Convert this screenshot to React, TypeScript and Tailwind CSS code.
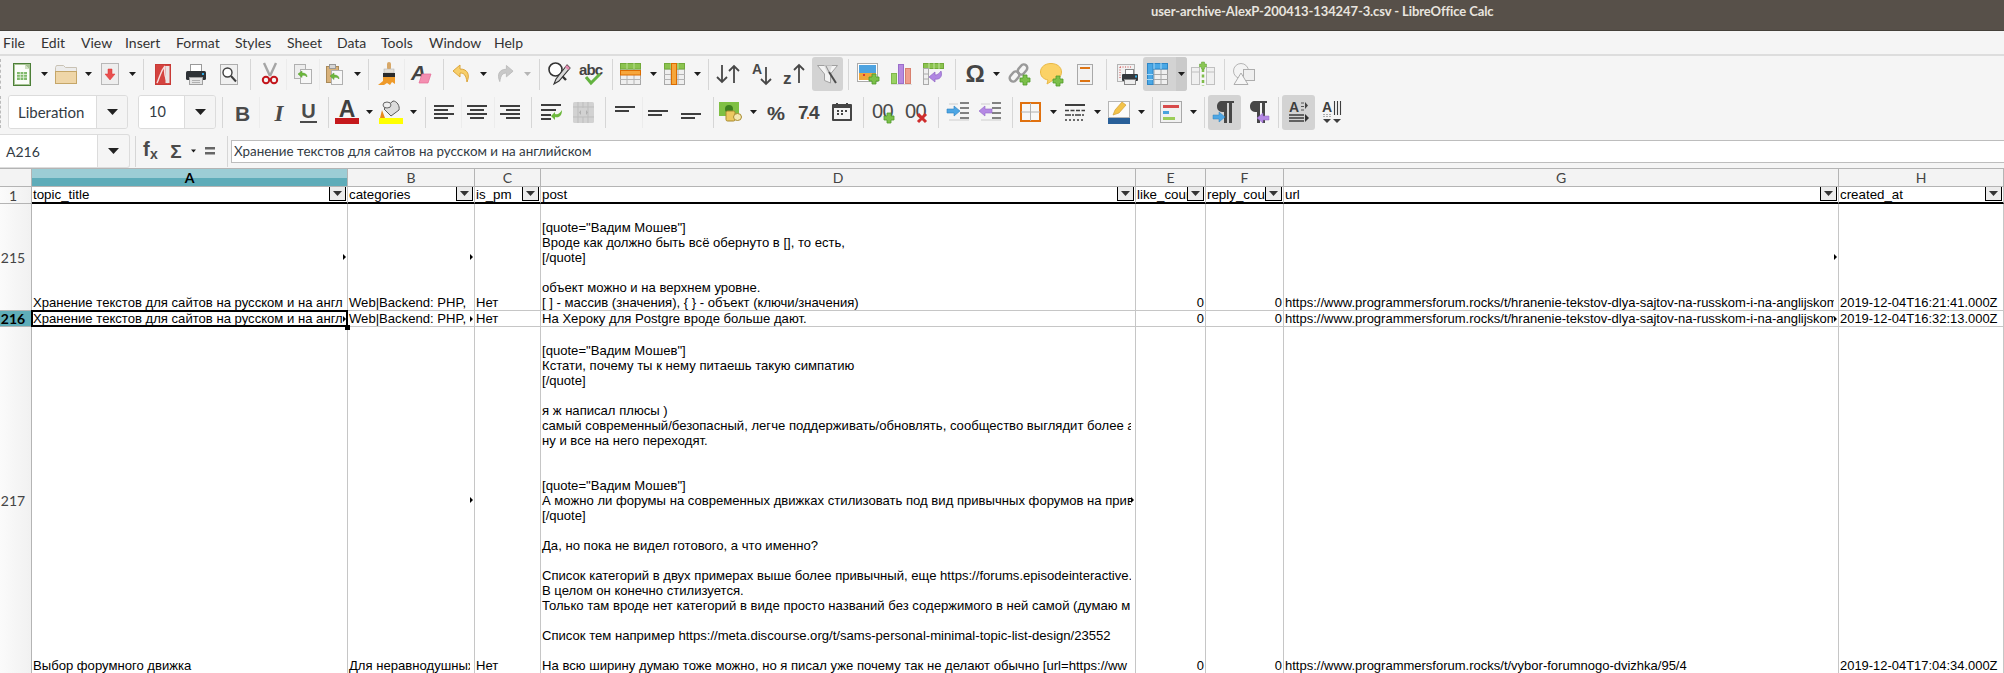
import React from 'react';
import clsx from 'clsx';

type IconProps = { className?: string };

const Svg: React.FC<{ w: number; h: number; className?: string; children: React.ReactNode }> = ({ w, h, className, children }) => (
  <svg width={w} height={h} viewBox={`0 0 ${w} ${h}`} className={clsx('shrink-0 overflow-visible', className)}>
    {children}
  </svg>
);

const Plus = ({ x, y }: { x: number; y: number }) => (
  <path
    d={`M${x + 3} ${y}h4v3h3v4h-3v3h-4v-3h-3v-4h3z`}
    fill="#7cc04a"
    stroke="#4f9a2a"
    strokeWidth="0.8"
  />
);

const Arrow = ({ className, gray }: IconProps & { gray?: boolean }) => (
  <Svg w={7} h={4} className={className}>
    <polygon points="0,0 7,0 3.5,4" fill={gray ? '#b5b5b5' : '#1d1d1d'} />
  </Svg>
);
const Sep = ({ className }: IconProps) => <div className={clsx('w-px h-[31px] shrink-0 bg-[#d6d6d6]', className)} />;
const LightSep = ({ className }: IconProps) => <div className={clsx('w-px h-[31px] shrink-0 bg-[#ececec]', className)} />;

const NewDoc = ({ className }: IconProps) => (
  <Svg w={18} h={23} className={className}>
    <rect x="0.5" y="0.5" width="17" height="22" fill="#a9c596" stroke="#4c7f38" />
    <path d="M2 2h10l4 4v15H2z" fill="#fbfdf9" />
    <path d="M12 2l4 4h-4z" fill="#cfe0c0" />
    <rect x="4" y="9" width="10" height="8" fill="#7fb96a" />
    <path d="M4 11.5h10M4 14.2h10M7.3 9v8M10.6 9v8" stroke="#e8f2e0" strokeWidth="0.8" />
  </Svg>
);
const Folder = ({ className }: IconProps) => (
  <Svg w={22} h={19} className={className}>
    <path d="M0.5 2.5l1-2h7l2 2h11v6h-21z" fill="#ececec" stroke="#c9c2b4" />
    <rect x="0.5" y="6.5" width="21" height="12" fill="#efd6a8" stroke="#c5a668" />
  </Svg>
);
const Save = ({ className }: IconProps) => (
  <Svg w={18} h={22} className={className}>
    <rect x="0.5" y="0.5" width="17" height="21" fill="#eeeeee" stroke="#b8b8b8" />
    <path d="M7 6h4v5h3l-5 6-5-6h3z" fill="#e8504f" stroke="#d33" strokeWidth="0.5" />
  </Svg>
);
const Pdf = ({ className }: IconProps) => (
  <Svg w={16} h={21} className={className}>
    <rect x="0.5" y="0.5" width="15" height="20" fill="#d4433f" stroke="#c83a36" />
    <path d="M10 2C5 8 5 13 2 19M10 2c-1 6 0 12 3 17" fill="none" stroke="#f6dcdc" strokeWidth="1.4" />
    <rect x="10.5" y="2" width="4" height="17" fill="#e9e4e4" />
  </Svg>
);
const Printer = ({ className }: IconProps) => (
  <Svg w={20} h={21} className={className}>
    <rect x="4.5" y="0.5" width="11" height="8" fill="#fff" stroke="#9a9a9a" />
    <rect x="0" y="7" width="20" height="9" rx="1.5" fill="#2e3236" />
    <rect x="16" y="9" width="2" height="2" fill="#32a9e0" />
    <rect x="3.5" y="13.5" width="13" height="7" fill="#e4e4e4" stroke="#a0a0a0" />
    <path d="M6 16.5h8M6 18.5h8" stroke="#b0b0b0" />
  </Svg>
);
const Preview = ({ className }: IconProps) => (
  <Svg w={18} h={21} className={className}>
    <rect x="0.5" y="0.5" width="17" height="20" fill="#f0f0f0" stroke="#adadad" />
    <circle cx="7.5" cy="8.5" r="4.5" fill="#fff" stroke="#3e3e3e" strokeWidth="1.4" />
    <path d="M11 12l5 5.5" stroke="#3e3e3e" strokeWidth="2" />
  </Svg>
);
const Cut = ({ className }: IconProps) => (
  <Svg w={16} h={22} className={className}>
    <path d="M2 0l6 13M14 0L8 13" stroke="#a5a5a5" strokeWidth="2.4" fill="none" />
    <circle cx="4" cy="17" r="3.2" fill="none" stroke="#c3161c" strokeWidth="2" />
    <circle cx="12" cy="17" r="3.2" fill="none" stroke="#c3161c" strokeWidth="2" />
  </Svg>
);
const GreenSwoop = ({ x, y }: { x: number; y: number }) => (
  <path d={`M${x} ${y + 3}l4-3v2c3 0 5 1 5 4-1-1.500-3-2-5-1.500v2z`} fill="#6cb83c" stroke="#559a2c" strokeWidth="0.5" />
);
const Copy = ({ className }: IconProps) => (
  <Svg w={18} h={20} className={className}>
    <rect x="0.5" y="0.5" width="11" height="14" fill="#ededed" stroke="#b0b0b0" />
    <rect x="6.5" y="5.500" width="11" height="14" fill="#f7f7f7" stroke="#b0b0b0" />
    <GreenSwoop x={4} y={7} />
  </Svg>
);
const Paste = ({ className }: IconProps) => (
  <Svg w={17} h={21} className={className}>
    <rect x="0.5" y="2.500" width="12" height="16" fill="#d9b27a" stroke="#a98a5a" />
    <rect x="3.500" y="0.500" width="6" height="4" fill="#d6d6d6" stroke="#999" />
    <rect x="5.500" y="6.500" width="11" height="14" fill="#f7f7f7" stroke="#b0b0b0" />
    <GreenSwoop x={4} y={9} />
  </Svg>
);
const Brush = ({ className }: IconProps) => (
  <Svg w={19} h={24} className={className}>
    <rect x="9" y="0" width="4" height="8" rx="2" fill="#d8a868" />
    <rect x="6" y="7" width="10" height="4" fill="#e4e0d8" stroke="#aaa" strokeWidth="0.5" />
    <rect x="5" y="11" width="12" height="4" fill="#2b2b2b" />
    <path d="M5 15h12v7l-3-2-2 3-3-2-3 2H0l5-4z" fill="#ee9a2a" />
  </Svg>
);
const ClearFormat = ({ className }: IconProps) => (
  <Svg w={21} h={20} className={className}>
    <text x="0" y="16" fontFamily="Liberation Sans" fontWeight="700" fontStyle="italic" fontSize="21" fill="#434343">A</text>
    <path d="M11 10h9l-3 9H8z" fill="#f48fb1" stroke="#e56a97" strokeWidth="0.7" />
  </Svg>
);
const Undo = ({ className, flip }: IconProps & { flip?: boolean }) => (
  <Svg w={19} h={18} className={className}>
    <g transform={flip ? 'matrix(-1 0 0 1 19 0)' : undefined}>
      <path
        d="M8 0L1 6l7 6V8c4 0 6 2 7 9 3-7 1-13-7-13z"
        fill={flip ? '#c8c8c8' : '#f7cf6b'}
        stroke={flip ? '#bcbcbc' : '#dca53b'}
        strokeWidth="1"
      />
    </g>
  </Svg>
);
const FindReplace = ({ className }: IconProps) => (
  <Svg w={22} h={24} className={className}>
    <circle cx="7.500" cy="7.500" r="6.500" fill="#fff" stroke="#333" strokeWidth="1.6" />
    <path d="M12 12l6 6" stroke="#333" strokeWidth="2.400" />
    <path d="M19 3l3 3-11 13-5 3 2-5z" fill="#d8d8d8" stroke="#333" strokeWidth="1.100" />
    <path d="M19 3l3 3-2 2-3-3z" fill="#e58bb0" />
  </Svg>
);
const Spell = ({ className }: IconProps) => (
  <Svg w={24} h={22} className={className}>
    <text x="0" y="12" fontFamily="Liberation Sans" fontWeight="700" fontSize="15" fill="#424242" textLength="24">abc</text>
    <path d="M7 14l5 6 9-9" fill="none" stroke="#63b340" strokeWidth="3" />
  </Svg>
);
const SheetBase = () => (
  <>
    <rect x="0.5" y="0.5" width="20" height="21" fill="#efefef" stroke="#a8a8a8" />
    <path d="M7 0v22M14 0v22M0 6h21M0 11.500h21M0 16.500h21" stroke="#b4b4b4" />
    <rect x="0.500" y="0.500" width="20" height="5.500" fill="#8bc34f" stroke="#72aa3a" />
    <path d="M7 0v6M14 0v6" stroke="#b9de93" />
  </>
);
const RowTable = ({ className }: IconProps) => (
  <Svg w={21} h={22} className={className}>
    <SheetBase />
    <rect x="0.500" y="7.500" width="20" height="4.500" fill="#f6a63c" stroke="#dc6c00" />
  </Svg>
);
const ColTable = ({ className }: IconProps) => (
  <Svg w={21} h={22} className={className}>
    <SheetBase />
    <rect x="7.500" y="0.500" width="5" height="21" fill="#f6a63c" stroke="#dc6c00" />
  </Svg>
);
const Sort = ({ className }: IconProps) => (
  <Svg w={24} h={20} className={className}>
    <path d="M6 1v17M1 13l5 5 5-5M18 19V2M13 7l5-5 5 5" fill="none" stroke="#474747" strokeWidth="1.800" />
  </Svg>
);
const SortAsc = ({ className }: IconProps) => (
  <Svg w={21} h={22} className={className}>
    <text x="0" y="11" fontFamily="Liberation Sans" fontWeight="700" fontSize="14" fill="#474747">A</text>
    <path d="M14 4v17M9 16l5 5 5-5" fill="none" stroke="#474747" strokeWidth="1.800" />
  </Svg>
);
const SortDesc = ({ className }: IconProps) => (
  <Svg w={23} h={22} className={className}>
    <text x="0" y="21" fontFamily="Liberation Sans" fontWeight="700" fontSize="17" fill="#474747">z</text>
    <path d="M16 20V2M11 7l5-5 5 5" fill="none" stroke="#474747" strokeWidth="1.800" />
  </Svg>
);
const Funnel = ({ className }: IconProps) => (
  <Svg w={21} h={19} className={className}>
    <path d="M0.500 0.500h20l-7 8.500v9l-6-2.500v-6.500z" fill="#f3f3f3" stroke="#a0a0a0" />
    <path d="M7 0.500l3 7h3l2-7z" fill="#dcdcdc" />
    <path d="M12 7l7 11" stroke="#4c4c4c" strokeWidth="2" />
    <path d="M9 1l3 6" stroke="#8a8a8a" strokeWidth="1" />
  </Svg>
);
const InsertImage = ({ className }: IconProps) => (
  <Svg w={23} h={22} className={className}>
    <rect x="0.500" y="0.500" width="20" height="18" fill="#fff" stroke="#aaa" />
    <rect x="2" y="2" width="17" height="8" fill="#4ea3e0" />
    <rect x="2" y="10" width="17" height="7" fill="#f0a63c" />
    <rect x="6" y="11" width="2" height="2" fill="#d33" />
    <Plus x={12} y={11} />
  </Svg>
);
const Chart = ({ className }: IconProps) => (
  <Svg w={21} h={21} className={className}>
    <rect x="0.500" y="9.500" width="5" height="10" fill="#9ad264" stroke="#7fb84b" />
    <rect x="7.500" y="0.500" width="5" height="19" fill="#b68ae0" stroke="#9a6ecb" />
    <rect x="14.500" y="4.500" width="5" height="15" fill="#ef9e8e" stroke="#d8806e" />
    <path d="M0 20.500h21" stroke="#ddd" />
  </Svg>
);
const Pivot = ({ className }: IconProps) => (
  <Svg w={21} h={22} className={className}>
    <rect x="0.500" y="0.500" width="20" height="5" fill="#8bc34f" stroke="#72aa3a" />
    <path d="M6 0v6M11 0v6M16 0v6" stroke="#c3e2a2" />
    <rect x="0.500" y="5.500" width="5" height="16" fill="#efefef" stroke="#aaa" />
    <path d="M0 11h6M0 16h6" stroke="#aaa" />
    <path d="M18 8c2 6-2 9-6 8v3l-6-5 6-5v3c2 0 4-1 6-4z" fill="#b086e2" stroke="#8f65c4" strokeWidth="0.700" />
  </Svg>
);
const Omega = ({ className }: IconProps) => (
  <Svg w={20} h={20} className={className}>
    <text x="10" y="18" textAnchor="middle" fontFamily="Liberation Sans" fontWeight="700" fontSize="24" fill="#454545">Ω</text>
  </Svg>
);
const LinkIcon = ({ className }: IconProps) => (
  <Svg w={23} h={23} className={className}>
    <g fill="none" stroke="#9a9a9a" strokeWidth="2.500">
      <rect x="11" y="1" width="7" height="11" rx="3.500" transform="rotate(40 14.500 6.500)" />
      <rect x="3" y="8" width="7" height="11" rx="3.500" transform="rotate(40 6.500 13.500)" />
    </g>
    <Plus x={12} y={12} />
  </Svg>
);
const CommentIcon = ({ className }: IconProps) => (
  <Svg w={23} h={23} className={className}>
    <path d="M11 0.500c6 0 10.500 3.500 10.500 8.500s-4.500 8.500-9 8.500L7 21l1-4C3 16 0.500 13 0.500 9 0.500 4 5 0.500 11 0.500z" fill="#fbd267" stroke="#e9b844" />
    <Plus x={13} y={13} />
  </Svg>
);
const HeaderFooter = ({ className }: IconProps) => (
  <Svg w={16} h={21} className={className}>
    <rect x="0.500" y="0.500" width="15" height="20" fill="#f2f2f2" stroke="#a9a9a9" />
    <rect x="3" y="3" width="10" height="2" fill="#dd7413" />
    <rect x="3" y="16" width="10" height="2" fill="#dd7413" />
  </Svg>
);
const PrintArea = ({ className }: IconProps) => (
  <Svg w={21} h={21} className={className}>
    <rect x="0.500" y="0.500" width="17" height="17" fill="#f1f1f1" stroke="#b4b4b4" />
    <path d="M3 3h11M3 3v12" stroke="#d34a4a" strokeDasharray="1 1.500" fill="none" />
    <rect x="8.500" y="5.500" width="8" height="5" fill="#fff" stroke="#888" />
    <rect x="5" y="10" width="16" height="7" rx="1" fill="#34383c" />
    <rect x="18" y="11.500" width="2" height="2" fill="#32a9e0" />
    <rect x="7.500" y="15.500" width="11" height="5" fill="#eee" stroke="#888" />
  </Svg>
);
const Freeze = ({ className }: IconProps) => (
  <Svg w={21} h={22} className={className}>
    <rect x="0.500" y="0.500" width="20" height="21" fill="#efefef" stroke="#a0a0a0" />
    <path d="M7 0v22M14 0v22M0 6h21M0 11.500h21M0 16.500h21" stroke="#a8a8a8" />
    <rect x="0.500" y="0.500" width="20" height="5.500" fill="#4aa8e6" stroke="#2e86c6" />
    <rect x="0.500" y="0.500" width="5.500" height="21" fill="#4aa8e6" stroke="#2e86c6" />
    <path d="M7 0v6M14 0v6" stroke="#a8d8f6" />
    <path d="M0 11.500h6M0 16.500h6" stroke="#a8d8f6" />
  </Svg>
);
const SplitWindow = ({ className }: IconProps) => (
  <Svg w={24} h={24} className={className}>
    <rect x="0.500" y="5.500" width="8" height="17" fill="#f0f0f0" stroke="#c0c0c0" />
    <rect x="15.500" y="5.500" width="8" height="17" fill="#f0f0f0" stroke="#c0c0c0" />
    <path d="M0 10h8M16 10h8" stroke="#c0c0c0" />
    <path d="M12 7v17" stroke="#7fbd4a" strokeWidth="2.500" strokeDasharray="3 2.500" />
    <path d="M10.500 0h3v2h2v3h-2v2h-3v-2h-2v-3h2z" fill="#8ac654" stroke="#5f9e33" strokeWidth="0.500" />
  </Svg>
);
const Shapes = ({ className }: IconProps) => (
  <Svg w={22} h={22} className={className}>
    <circle cx="8" cy="8" r="7.500" fill="#f4f4f4" stroke="#b5b5b5" />
    <rect x="10.500" y="6.500" width="11" height="11" fill="#efefef" stroke="#adadad" />
    <path d="M8 10l7 11.500H1z" fill="#f6f6f6" stroke="#adadad" />
  </Svg>
);

const Letter = ({ w, children, italic, underline, color = '#4a4a4a', size = 21 }: { w: number; children: string; italic?: boolean; underline?: boolean; color?: string; size?: number }) => (
  <>
    <text x={w / 2} y={underline ? 17 : 20} textAnchor="middle" fontFamily="Liberation Sans" fontWeight="700" fontStyle={italic ? 'italic' : 'normal'} fontSize={size} fill={color}>
      {children}
    </text>
    {underline && <rect x="0" y="20" width={w} height="2" fill={color} />}
  </>
);
const Bold = ({ className }: IconProps) => (
  <Svg w={13} h={22} className={className}><Letter w={13}>B</Letter></Svg>
);
const Italic = ({ className }: IconProps) => (
  <Svg w={12} h={22} className={className}>
    <text x="6" y="20" textAnchor="middle" fontFamily="Liberation Serif" fontWeight="700" fontStyle="italic" fontSize="23" fill="#4a4a4a">I</text>
  </Svg>
);
const Underline = ({ className }: IconProps) => (
  <Svg w={17} h={23} className={className}><Letter w={17} underline size={20}>U</Letter></Svg>
);
const FontColor = ({ className }: IconProps) => (
  <Svg w={24} h={24} className={className}>
    <text x="12" y="17" textAnchor="middle" fontFamily="Liberation Sans" fontWeight="700" fontSize="23" fill="#3f3f3f">A</text>
    <rect x="0" y="18" width="24" height="6" fill="#c5181c" />
  </Svg>
);
const Bucket = ({ className }: IconProps) => (
  <Svg w={24} h={24} className={className}>
    <path d="M5 9l9-8c4 0 7 5 6 9l-8 6z" fill="#dcdcdc" stroke="#5a5a5a" />
    <ellipse cx="8" cy="5" rx="4" ry="3" fill="#eee" stroke="#666" />
    <path d="M3 10l3 8H1z" fill="#e78a1c" />
    <rect x="0" y="18" width="24" height="6" fill="#ffff00" />
  </Svg>
);
const AlignLines = ({ kind }: { kind: 'l' | 'c' | 'r' }) => {
  const x = kind === 'l' ? [0, 0, 0, 0] : kind === 'c' ? [0, 3, 0, 3] : [0, 6, 0, 6];
  const w = [20, 14, 20, 14];
  return (
    <>
      {[0, 4, 8, 12].map((y, i) => (
        <rect key={y} x={x[i]} y={y} width={w[i]} height="2" fill="#3e3e3e" />
      ))}
    </>
  );
};
const AlignLeft = ({ className }: IconProps) => <Svg w={20} h={14} className={className}><AlignLines kind="l" /></Svg>;
const AlignCenter = ({ className }: IconProps) => <Svg w={20} h={14} className={className}><AlignLines kind="c" /></Svg>;
const AlignRight = ({ className }: IconProps) => <Svg w={20} h={14} className={className}><AlignLines kind="r" /></Svg>;
const Wrap = ({ className }: IconProps) => (
  <Svg w={21} h={18} className={className}>
    <rect x="0" y="1" width="20" height="2" fill="#3e3e3e" />
    <rect x="0" y="6" width="15" height="2" fill="#3e3e3e" />
    <rect x="0" y="11" width="10" height="2" fill="#3e3e3e" />
    <rect x="0" y="15" width="10" height="2" fill="#3e3e3e" />
    <path d="M21 7c0 6-3 8-7 7v3l-4-4 4-4v2c3 1 5-1 7-4z" fill="#6cb83c" />
  </Svg>
);
const Merge = ({ className }: IconProps) => (
  <Svg w={21} h={21} className={className}>
    <rect x="0" y="0" width="21" height="21" rx="1.500" fill="#d2d2d2" />
    <path d="M5 0v21M10 0v6M10 15v6M15 0v21M0 5h21M0 15h21" stroke="#bdbdbd" />
    <path d="M8 8l-2 2.500L8 13zM13 8l2 2.500L13 13z" fill="#b0b0b0" />
  </Svg>
);
const VAlign = ({ className }: IconProps) => (
  <Svg w={20} h={6} className={className}>
    <rect x="0" y="0" width="20" height="2" fill="#3e3e3e" />
    <rect x="0" y="4" width="14" height="2" fill="#3e3e3e" />
  </Svg>
);
const Currency = ({ className }: IconProps) => (
  <Svg w={23} h={20} className={className}>
    <rect x="0" y="0" width="20" height="14" fill="#7fc043" />
    <circle cx="10" cy="7" r="4" fill="#3d7f1e" />
    <rect x="7" y="9" width="9" height="10" rx="1.500" fill="#ecc860" stroke="#a78a30" />
    <ellipse cx="18.500" cy="15" rx="4" ry="3.500" fill="#f3e7b0" stroke="#a78a30" />
  </Svg>
);
const Percent = ({ className }: IconProps) => (
  <Svg w={18} h={20} className={className}>
    <text x="9" y="17.500" textAnchor="middle" fontFamily="Liberation Sans" fontWeight="700" fontSize="19" fill="#444" textLength="18" lengthAdjust="spacingAndGlyphs">%</text>
  </Svg>
);
const Number74 = ({ className }: IconProps) => (
  <Svg w={22} h={20} className={className}>
    <text x="0" y="17" fontFamily="Liberation Sans" fontWeight="700" fontSize="19" fill="#444">7</text>
    <text x="11" y="17" fontFamily="Liberation Sans" fontWeight="700" fontSize="19" fill="#444">4</text>
    <rect x="9" y="15" width="2" height="2" fill="#ee7a1c" />
  </Svg>
);
const DateIcon = ({ className }: IconProps) => (
  <Svg w={20} h={18} className={className}>
    <rect x="0" y="1" width="20" height="17" rx="1" fill="#454545" />
    <rect x="4" y="0" width="2" height="3" fill="#454545" />
    <rect x="14" y="0" width="2" height="3" fill="#454545" />
    <rect x="2" y="5" width="16" height="11" fill="#f5f5f5" />
    <path d="M5 8h2M9 8h2M13 8h2M5 11h2M9 11h2" stroke="#454545" strokeWidth="2" />
  </Svg>
);
const Decimals = ({ className, add }: IconProps & { add?: boolean }) => (
  <Svg w={24} h={23} className={className}>
    <text x="0" y="17" fontFamily="Liberation Sans" fontSize="20" fill="#4a4a4a">0</text>
    <text x="10.500" y="17" fontFamily="Liberation Sans" fontSize="20" fill="#4a4a4a">0</text>
    {add ? <Plus x={12} y={12} /> : <path d="M13 13l8 8M21 13l-8 8" stroke="#cf2d2d" strokeWidth="3" />}
  </Svg>
);
const Indent = ({ className, out }: IconProps & { out?: boolean }) => (
  <Svg w={22} h={20} className={className}>
    <path d="M13 1h9M13 6h9M13 11h9M13 16h9" stroke="#5c5c5c" strokeWidth="1.600" />
    <path d="M2 18h20M2 2h9" stroke="#c4c4c4" strokeWidth="0.800" />
    {out ? (
      <path d="M0 9l6-5v3h7v4H6v3z" fill="#b589e4" stroke="#9166c6" strokeWidth="0.600" />
    ) : (
      <path d="M13 9L7 4v3H0v4h7v3z" fill="#4da6e4" stroke="#2e82bf" strokeWidth="0.600" />
    )}
  </Svg>
);
const Borders = ({ className }: IconProps) => (
  <Svg w={21} h={20} className={className}>
    <rect x="1" y="1" width="19" height="18" fill="#f7f7f7" stroke="#e0710f" strokeWidth="2" />
    <path d="M10.500 1v18M1 10h19" stroke="#b0b0b0" />
  </Svg>
);
const BorderStyle = ({ className }: IconProps) => (
  <Svg w={20} h={17} className={className}>
    <rect x="0" y="0" width="20" height="2" fill="#3e3e3e" />
    <path d="M0 6.500h20" stroke="#3e3e3e" strokeWidth="1.500" strokeDasharray="4 1.500" />
    <path d="M0 11h20" stroke="#3e3e3e" strokeWidth="1.500" strokeDasharray="6 1 2 1" />
    <path d="M0 16h20" stroke="#3e3e3e" strokeWidth="1.500" strokeDasharray="2 2" />
  </Svg>
);
const BorderColor = ({ className }: IconProps) => (
  <Svg w={22} h={23} className={className}>
    <rect x="0.500" y="0.500" width="21" height="16" fill="#fbfbfb" stroke="#b5b5b5" />
    <path d="M5 14l2-5 7-8 4 3-7 8z" fill="#f3c34a" stroke="#c9962a" strokeWidth="0.600" />
    <rect x="0" y="17" width="22" height="6" fill="#285f99" />
  </Svg>
);
const CondFormat = ({ className }: IconProps) => (
  <Svg w={22} h={22} className={className}>
    <rect x="0.500" y="0.500" width="21" height="21" fill="#f1f1f1" stroke="#a8a8a8" />
    <rect x="3" y="4" width="16" height="3" fill="#d84b4b" />
    <rect x="3" y="10" width="6" height="3" fill="#4aa3dc" />
    <rect x="3" y="16" width="12" height="3" fill="#9ccd58" />
  </Svg>
);
const Pilcrow = ({ className, rtl }: IconProps & { rtl?: boolean }) => (
  <Svg w={23} h={23} className={className}>
    <path d="M9 0h12v2h-2v20h-3V2h-2v20h-3V11C6 11 4 9 4 5.500S6 0 9 0z" fill="#474747" />
    {rtl ? (
      <path d="M22 17h-6v-3l-6 5 6 5v-3h6z" fill="#b589e4" stroke="#9166c6" strokeWidth="0.500" transform="translate(1 -2)" />
    ) : (
      <path d="M0 14h6v-3l6 5-6 5v-3H0z" fill="#4da6e4" stroke="#2e82bf" strokeWidth="0.500" />
    )}
  </Svg>
);
const TextHorizontal = ({ className }: IconProps) => (
  <Svg w={20} h={22} className={className}>
    <text x="0" y="11" fontFamily="Liberation Sans" fontWeight="700" fontSize="14" fill="#3e3e3e">A</text>
    <path d="M12 2h3M12 5.500h3M12 9h3" stroke="#555" />
    <path d="M16 1l3 3.500-3 3.500z" fill="#444" />
    <path d="M0 14h15M0 17h15M0 20h15" stroke="#3e3e3e" strokeWidth="1.300" />
    <path d="M16 13l4 4-4 4z" fill="#333" />
  </Svg>
);
const TextVertical = ({ className }: IconProps) => (
  <Svg w={19} h={22} className={className}>
    <text x="0" y="11" fontFamily="Liberation Sans" fontWeight="700" fontSize="14" fill="#3e3e3e">A</text>
    <path d="M12.500 0v14M15.500 0v14M18.500 0v14" stroke="#3e3e3e" strokeWidth="1.100" />
    <path d="M2 13v4M5 13v4M8 13v4" stroke="#666" strokeDasharray="1 1" />
    <path d="M1 18h8l-4 4zM11 18h8l-4 4z" fill="#3e3e3e" />
  </Svg>
);

const Combo = ({ className, left, right, text, textClass }: IconProps & { left: string; right: string; text: string; textClass: string }) => (
  <div className={clsx('flex h-[34px] shrink-0 rounded-[3px] border border-[#dcdcdc] overflow-hidden', className)}>
    <div className={clsx('flex items-center bg-white', left)}>
      <span className={clsx('block overflow-hidden whitespace-pre text-[#333b44]', textClass)}>{text}</span>
    </div>
    <div className={clsx('flex items-center justify-center border-l border-[#dcdcdc] bg-[#f4f4f4]', right)}>
      <Svg w={11} h={6}><polygon points="0,0 11,0 5.500,6" fill="#222" /></Svg>
    </div>
  </div>
);

const Toolbar1 = () => (
  <div className="flex items-center h-[36px] shrink-0">
    <div className="w-px h-[30px] border-l border-dashed border-[#bbbbbb]" />
    <NewDoc className="ml-[12px]" />
    <Arrow className="ml-[10px]" />
    <Folder className="ml-[7px]" />
    <Arrow className="ml-[8px]" />
    <Save className="ml-[9px]" />
    <Arrow className="ml-[10px]" />
    <Sep className="ml-[7px]" />
    <Pdf className="ml-[11px]" />
    <Printer className="ml-[15px]" />
    <Preview className="ml-[14px]" />
    <Sep className="ml-[12px]" />
    <Cut className="ml-[11px]" />
    <LightSep className="ml-[8px]" />
    <Copy className="ml-[7px]" />
    <LightSep className="ml-[7px]" />
    <Paste className="ml-[6px]" />
    <Arrow className="ml-[11px]" />
    <Sep className="ml-[7px]" />
    <Brush className="ml-[9px]" />
    <LightSep className="ml-[7px]" />
    <ClearFormat className="ml-[6px]" />
    <Sep className="ml-[11px]" />
    <Undo className="ml-[8px]" />
    <Arrow className="ml-[9px]" />
    <Undo flip className="ml-[9px] w-[18px]" />
    <Arrow gray className="ml-[10px]" />
    <Sep className="ml-[8px]" />
    <FindReplace className="ml-[8px]" />
    <Spell className="ml-[9px]" />
    <Sep className="ml-[9px]" />
    <RowTable className="ml-[7px]" />
    <Arrow className="ml-[9px]" />
    <ColTable className="ml-[7px]" />
    <Arrow className="ml-[9px]" />
    <Sep className="ml-[7px]" />
    <Sort className="ml-[7px]" />
    <SortAsc className="ml-[12px]" />
    <SortDesc className="ml-[10px]" />
    <div className="flex items-center justify-center ml-[6px] w-[31px] h-[34px] rounded-[3px] bg-[#d3d3d3] shrink-0">
      <Funnel />
    </div>
    <Sep className="ml-[5px]" />
    <InsertImage className="ml-[8px]" />
    <Chart className="ml-[11px]" />
    <Pivot className="ml-[11px]" />
    <Sep className="ml-[11px]" />
    <Omega className="ml-[9px]" />
    <Arrow className="ml-[8px]" />
    <LinkIcon className="ml-[8px]" />
    <CommentIcon className="ml-[9px]" />
    <HeaderFooter className="ml-[14px]" />
    <Sep className="ml-[13px]" />
    <PrintArea className="ml-[10px]" />
    <div className="flex items-center ml-[5px] w-[44px] h-[34px] rounded-[3px] bg-[#d3d3d3] shrink-0">
      <Freeze className="ml-[4px]" />
      <div className="flex items-center justify-center ml-[8px] flex-1 h-full rounded-r-[3px] bg-[#cacaca]">
        <Arrow />
      </div>
    </div>
    <SplitWindow className="ml-[4px]" />
    <Sep className="ml-[9px]" />
    <Shapes className="ml-[8px]" />
  </div>
);

const Toolbar2 = () => (
  <div className="flex items-center h-[42px] shrink-0 -translate-y-px">
    <div className="w-px h-[32px] border-l border-dashed border-[#bbbbbb]" />
    <Combo className="ml-[7px] w-[120px]" left="w-[87px] pl-[9px]" right="flex-1" text="Liberation S" textClass="w-[70px] text-[15px]" />
    <Combo className="ml-[10px] w-[78px]" left="w-[45px] pl-[10px]" right="flex-1" text="10" textClass="text-[14.5px]" />
    <Sep className="ml-[6px]" />
    <Bold className="ml-[13px]" />
    <LightSep className="ml-[10px]" />
    <Italic className="ml-[13px]" />
    <Underline className="ml-[15px]" />
    <Sep className="ml-[11px]" />
    <FontColor className="ml-[6px]" />
    <Arrow className="ml-[7px]" />
    <Bucket className="ml-[6px]" />
    <Arrow className="ml-[7px]" />
    <Sep className="ml-[8px]" />
    <AlignLeft className="ml-[8px]" />
    <LightSep className="ml-[7px]" />
    <AlignCenter className="ml-[5px]" />
    <LightSep className="ml-[7px]" />
    <AlignRight className="ml-[5px]" />
    <Sep className="ml-[11px]" />
    <Wrap className="ml-[9px]" />
    <Merge className="ml-[11px]" />
    <Sep className="ml-[11px]" />
    <VAlign className="ml-[9px] -translate-y-[3px]" />
    <LightSep className="ml-[7px]" />
    <VAlign className="ml-[5px] translate-y-[1px]" />
    <VAlign className="ml-[13px] translate-y-[4px]" />
    <Sep className="ml-[12px]" />
    <Currency className="ml-[5px]" />
    <Arrow className="ml-[8px]" />
    <Percent className="ml-[10px]" />
    <Number74 className="ml-[13px]" />
    <DateIcon className="ml-[12px]" />
    <Sep className="ml-[11px]" />
    <Decimals add className="ml-[8px]" />
    <Decimals className="ml-[9px]" />
    <Sep className="ml-[9px]" />
    <Indent className="ml-[8px]" />
    <Indent out className="ml-[10px]" />
    <Sep className="ml-[11px]" />
    <Borders className="ml-[7px]" />
    <Arrow className="ml-[9px]" />
    <BorderStyle className="ml-[8px]" />
    <Arrow className="ml-[9px]" />
    <BorderColor className="ml-[7px]" />
    <Arrow className="ml-[8px]" />
    <Sep className="ml-[7px]" />
    <CondFormat className="ml-[7px]" />
    <Arrow className="ml-[8px]" />
    <Sep className="ml-[7px]" />
    <div className="flex items-center justify-center ml-[3px] w-[33px] h-[35px] rounded-[3px] bg-[#d3d3d3] shrink-0">
      <Pilcrow />
    </div>
    <Pilcrow rtl className="ml-[5px]" />
    <Sep className="ml-[9px]" />
    <div className="flex items-center justify-center ml-[3px] w-[33px] h-[35px] rounded-[3px] bg-[#d3d3d3] shrink-0">
      <TextHorizontal />
    </div>
    <TextVertical className="ml-[7px]" />
  </div>
);

const FormulaBar = () => (
  <div className="flex items-center h-[34px] shrink-0">
    <div className="flex h-[34px] w-[130px] shrink-0 rounded-r-[3px] border border-l-0 border-[#dcdcdc] overflow-hidden">
      <div className="flex items-center w-[97px] pl-[6px] bg-white text-[14px] text-[#333b44]">A216</div>
      <div className="flex items-center justify-center flex-1 border-l border-[#dcdcdc]">
        <Svg w={11} h={6}><polygon points="0,0 11,0 5.500,6" fill="#222" /></Svg>
      </div>
    </div>
    <Sep className="ml-[5px] h-[24px]" />
    <Svg w={17} h={20} className="ml-[7px]">
      <text x="0" y="15" fontFamily="Liberation Sans" fontWeight="700" fontSize="20" fill="#4a4a4a">f</text>
      <text x="7" y="18" fontFamily="Liberation Sans" fontWeight="700" fontSize="14" fill="#4a4a4a">x</text>
    </Svg>
    <Svg w={12} h={18} className="ml-[10px]">
      <text x="6" y="16" textAnchor="middle" fontFamily="Liberation Sans" fontWeight="700" fontSize="19" fill="#4a4a4a">Σ</text>
    </Svg>
    <Arrow className="ml-[9px] w-[5px]" />
    <Svg w={10} h={8} className="ml-[9px]">
      <rect x="0" y="0" width="10" height="2.500" fill="#666" />
      <rect x="0" y="5" width="10" height="2.500" fill="#666" />
    </Svg>
    <Sep className="ml-[12px] h-[24px]" />
    <div className="flex items-center flex-1 ml-[3px] h-[23px] pl-[2px] bg-white border border-r-0 border-[#bdbdbd] text-[13.4px] text-[#333b44] whitespace-pre">
      Хранение текстов для сайтов на русском и на английском
    </div>
  </div>
);

const ColHead = ({ children, active }: { children: string; active?: boolean }) => (
  <div
    className={clsx(
      'flex items-center justify-center border-t border-b border-r border-[#b4b4b4] text-[14px]',
      active ? 'bg-[linear-gradient(#9ccdd5_0,#9ccdd5_55%,#5eacb9_55%,#5eacb9_100%)] font-bold text-black' : 'bg-[#f3f3f3] text-[#444444]',
    )}
  >
    {children}
  </div>
);

const RowHead = ({ children, active }: { children: string; active?: boolean }) => (
  <div
    className={clsx(
      'flex items-center justify-center pr-[5px] border-r border-b border-[#b4b4b4] text-[14px]',
      active ? 'bg-[#5fadb9] font-bold text-black' : 'bg-linear-to-r from-[#fbfbfb] to-[#f1f1f1] text-[#444444]',
    )}
  >
    {children}
  </div>
);

const FilterButton = () => (
  <div className="absolute right-px bottom-[1px] flex items-center justify-center w-[17px] h-[15px] bg-[#ececec] border border-black">
    <Svg w={9} h={5}><polygon points="0,0 9,0 4.500,5" fill="#333" /></Svg>
  </div>
);

const HeadCell = ({ children }: { children: string }) => (
  <div className="relative flex items-center border-r border-b-2 border-r-[#c6c6c6] border-b-black bg-white overflow-hidden">
    <span className="pl-[1px] whitespace-pre">{children}</span>
    <FilterButton />
  </div>
);

const Clip = () => (
  <Svg w={3} h={6} className="absolute right-[1px] top-1/2 -translate-y-1/2">
    <polygon points="0,0 3,3 0,6" fill="#000" />
  </Svg>
);

const Cell = ({ children, clip, right, latin, url }: { children?: string; clip?: boolean; right?: boolean; latin?: boolean; url?: boolean }) => (
  <div className={clsx('relative flex items-end border-r border-b border-[#c6c6c6] bg-white overflow-hidden', url ? 'text-[13px]' : latin ? 'text-[12.95px]' : 'text-[13.1px]')}>
    <div className={clsx('min-w-0 flex-1 overflow-hidden whitespace-pre leading-[15px]', right ? 'pr-px text-right' : 'mr-[4px] pl-[1px]')}>
      {children}
    </div>
    {clip && <Clip />}
  </div>
);

const post215 = `[quote="Вадим Мошев"]
Вроде как должно быть всё обернуто в [], то есть,
[/quote]

объект можно и на верхнем уровне.
[ ] - массив (значения), { } - объект (ключи/значения)`;

const post217 = `[quote="Вадим Мошев"]
Кстати, почему ты к нему питаешь такую симпатию
[/quote]

я ж написал плюсы )
самый современный/безопасный, легче поддерживать/обновлять, сообщество выглядит более а
ну и все на него переходят.


[quote="Вадим Мошев"]
А можно ли форумы на современных движках стилизовать под вид привычных форумов на прив
[/quote]

Да, но пока не видел готового, а что именно?

Список категорий в двух примерах выше более привычный, еще https://forums.episodeinteractive.
В целом он конечно стилизуется.
Только там вроде нет категорий в виде просто названий без содержимого в ней самой (думаю м
 
Список тем например https://meta.discourse.org/t/sams-personal-minimal-topic-list-design/23552

На всю ширину думаю тоже можно, но я писал уже почему так не делают обычно [url=https://ww`;

const title = 'Хранение текстов для сайтов на русском и на англ';
const url1 = 'https://www.programmersforum.rocks/t/hranenie-tekstov-dlya-sajtov-na-russkom-i-na-anglijskom';

const Sheet = () => (
  <div className="grid flex-1 min-h-0 grid-cols-[32px_316px_127px_66px_595px_70px_78px_555px_165px] grid-rows-[19px_17px_107px_16px_347px] text-[13.33px] text-black font-['Liberation_Sans',sans-serif]">
    <div className="border-t border-b border-r border-[#b4b4b4] bg-[#f3f3f3]" />
    <div className="contents font-['Lato',sans-serif]">
      <ColHead active>A</ColHead>
      <ColHead>B</ColHead>
      <ColHead>C</ColHead>
      <ColHead>D</ColHead>
      <ColHead>E</ColHead>
      <ColHead>F</ColHead>
      <ColHead>G</ColHead>
      <ColHead>H</ColHead>
    </div>

    <div className="contents font-['Lato',sans-serif]"><RowHead>1</RowHead></div>
    <HeadCell>topic_title</HeadCell>
    <HeadCell>categories</HeadCell>
    <HeadCell>is_pm</HeadCell>
    <HeadCell>post</HeadCell>
    <HeadCell>like_count</HeadCell>
    <HeadCell>reply_count</HeadCell>
    <HeadCell>url</HeadCell>
    <HeadCell>created_at</HeadCell>

    <div className="contents font-['Lato',sans-serif]"><RowHead>215</RowHead></div>
    <Cell clip>{title}</Cell>
    <Cell clip>{'Web|Backend: PHP,'}</Cell>
    <Cell>Нет</Cell>
    <Cell>{post215}</Cell>
    <Cell right latin>0</Cell>
    <Cell right latin>0</Cell>
    <Cell clip url>{url1}</Cell>
    <Cell latin>2019-12-04T16:21:41.000Z</Cell>

    <div className="contents font-['Lato',sans-serif]"><RowHead active>216</RowHead></div>
    <div className="relative z-10 flex items-end border-r border-b border-[#c6c6c6] bg-white text-[13.1px]">
      <div className="min-w-0 flex-1 mr-[4px] pl-[1px] overflow-hidden whitespace-pre leading-[15px]">{title}</div>
      <Clip />
      <div className="absolute -inset-x-px -top-px -bottom-px border-2 border-black" />
      <div className="absolute -right-[3px] -bottom-[4px] w-[5px] h-[5px] bg-black" />
    </div>
    <Cell clip>{'Web|Backend: PHP,'}</Cell>
    <Cell>Нет</Cell>
    <Cell>На Хероку для Postgre вроде больше дают.</Cell>
    <Cell right latin>0</Cell>
    <Cell right latin>0</Cell>
    <Cell clip url>{url1}</Cell>
    <Cell latin>2019-12-04T16:32:13.000Z</Cell>

    <div className="contents font-['Lato',sans-serif]"><RowHead>217</RowHead></div>
    <Cell>Выбор форумного движка</Cell>
    <Cell clip>Для неравнодушных</Cell>
    <Cell>Нет</Cell>
    <Cell clip>{post217}</Cell>
    <Cell right latin>0</Cell>
    <Cell right latin>0</Cell>
    <Cell url>https://www.programmersforum.rocks/t/vybor-forumnogo-dvizhka/95/4</Cell>
    <Cell latin>2019-12-04T17:04:34.000Z</Cell>
  </div>
);

export default function App() {
  return (
    <div className="flex flex-col w-[2004px] h-[673px] overflow-hidden bg-[#f5f5f5] text-[#333333] font-['Lato',sans-serif]">
      <div className="flex items-center h-[31px] shrink-0 pb-[7px] pl-[1151px] bg-[#575049] border-b border-[#45403a] text-[13px] tracking-[-0.1px] font-bold text-[#e8e4df] whitespace-pre">
        user-archive-AlexP-200413-134247-3.csv - LibreOffice Calc
      </div>
      <div className="flex items-center h-[25px] shrink-0 pl-[3px] border-b-2 border-[#dddddd] text-[14px]">
        <span className="w-[38px]">File</span>
        <span className="w-[40px]">Edit</span>
        <span className="w-[44px]">View</span>
        <span className="w-[51px]">Insert</span>
        <span className="w-[59px]">Format</span>
        <span className="w-[52px]">Styles</span>
        <span className="w-[50px]">Sheet</span>
        <span className="w-[44px]">Data</span>
        <span className="w-[48px]">Tools</span>
        <span className="w-[65px]">Window</span>
        <span>Help</span>
      </div>
      <Toolbar1 />
      <Toolbar2 />
      <FormulaBar />
      <Sheet />
    </div>
  );
}
